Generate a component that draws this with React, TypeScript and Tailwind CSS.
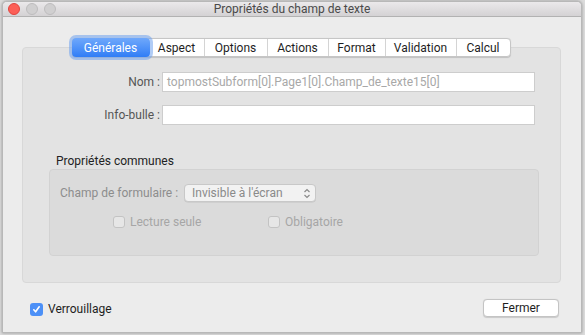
import React from "react";

const tabs = [
  { label: "Générales", w: "w-[78px]" },
  { label: "Aspect", w: "w-[54px]" },
  { label: "Options", w: "w-[63px]" },
  { label: "Actions", w: "w-[61px]" },
  { label: "Format", w: "w-[57px]" },
  { label: "Validation", w: "w-[71px]" },
  { label: "Calcul", w: "w-[54px]" },
];

export default function App() {
  return (
    <div
      className="w-[585px] h-[335px] bg-[#dcdcdc] overflow-hidden"
      style={{ fontFamily: "Roboto, 'Liberation Sans', sans-serif" }}
    >
      <div className="ml-[2px] mt-[1px] w-[580px] h-[332px] flex flex-col bg-[#ececec] border border-[#b8b8b8] rounded-t-[5px] shadow-[0_0_3px_rgba(0,0,0,0.35)] overflow-hidden">
        {/* title bar */}
        <div className="relative h-[15px] shrink-0 flex items-center justify-center bg-gradient-to-b from-[#ebe9eb] to-[#d4d2d4] border-b border-[#b2b2b2]">
          <div className="absolute left-[5px] top-[1px] flex gap-[6px]">
            <div className="w-[12px] h-[12px] rounded-full bg-[#fc5f57] border border-[#e0443e]" />
            <div className="w-[12px] h-[12px] rounded-full bg-[#d0cfd0] border border-[#bdbcbd]" />
            <div className="w-[12px] h-[12px] rounded-full bg-[#d0cfd0] border border-[#bdbcbd]" />
          </div>
          <span className="text-[12px] leading-none text-[#4a4a4a]">Propriétés du champ de texte</span>
        </div>

        {/* body */}
        <div className="flex-1 flex flex-col pt-[21px] px-[19px]">
          {/* tabs */}
          <div className="relative z-10 flex justify-center mb-[-10px] pr-[2px]">
            <div className="flex h-[19px] rounded-[4px] bg-white border border-[#c6c6c6] shadow-[0_0.5px_1px_rgba(0,0,0,0.15)]">
              {tabs.map((t, i) =>
                i === 0 ? (
                  <div
                    key={t.label}
                    className={`${t.w} -my-[1px] -ml-[1px] flex items-center justify-center rounded-[4px] bg-gradient-to-b from-[#6fa8fb] to-[#2f7df6] text-white text-[12px] shadow-[0_0_0_3px_rgba(112,162,238,0.55)]`}
                  >
                    {t.label}
                  </div>
                ) : (
                  <div
                    key={t.label}
                    className={`${t.w} flex items-center justify-center text-[12px] text-[#1e1e1e] ${i > 1 ? "border-l border-[#d4d4d4]" : ""}`}
                  >
                    {t.label}
                  </div>
                )
              )}
            </div>
          </div>

          {/* panel */}
          <div className="w-[539px] h-[236px] bg-[#e3e3e3] border border-[#d8d8d8] rounded-[4px] pt-[24px] pr-[25px] flex flex-col">
            <div className="flex items-center h-[20px]">
              <div className="w-[139px] text-right pr-[2px] text-[12px] text-[#555]">Nom :</div>
              <div className="flex-1 h-[20px] bg-white border border-[#cdcdcd] flex items-center px-[4px] text-[12px] text-[#a8a8a8]">
                topmostSubform[0].Page1[0].Champ_de_texte15[0]
              </div>
            </div>
            <div className="flex items-center h-[20px] mt-[13px]">
              <div className="w-[139px] text-right pr-[2px] text-[12px] text-[#555]">Info-bulle :</div>
              <div className="flex-1 h-[20px] bg-white border border-[#cdcdcd]" />
            </div>

            <div className="ml-[33px] mt-[29px] text-[12px] leading-[14px] text-[#222]">Propriétés communes</div>
            <div className="ml-[26px] mt-[1px] w-[490px] h-[87px] bg-[#dbdbdb] border border-[#d2d2d2] rounded-[4px] pt-[14px] pl-[10px]">
              <div className="flex items-center">
                <span className="w-[124px] shrink-0 text-[12px] text-[#8d8d8d]">Champ de formulaire :</span>
                <div className="w-[132px] h-[18px] bg-[#f2f2f2] border border-[#c8c8c8] rounded-[4px] flex items-center justify-between pl-[7px] pr-[4px] shadow-[0_0.5px_0.5px_rgba(0,0,0,0.1)]">
                  <span className="text-[12px] text-[#8a8a8a]">Invisible à l'écran</span>
                  <svg width="8" height="11" viewBox="0 0 8 11" fill="none" stroke="#8a8a8a" strokeWidth="1.2">
                    <path d="M1.5 4 L4 1.5 L6.5 4" />
                    <path d="M1.5 7 L4 9.5 L6.5 7" />
                  </svg>
                </div>
              </div>
              <div className="flex items-center mt-[11px] ml-[53px]">
                <div className="w-[155px] flex items-center">
                  <div className="w-[12px] h-[12px] rounded-[3px] border border-[#c3c3c3] bg-[#e6e6e6]" />
                  <span className="ml-[5px] text-[12px] text-[#a6a6a6]">Lecture seule</span>
                </div>
                <div className="flex items-center">
                  <div className="w-[12px] h-[12px] rounded-[3px] border border-[#c3c3c3] bg-[#e6e6e6]" />
                  <span className="ml-[5px] text-[12px] text-[#a6a6a6]">Obligatoire</span>
                </div>
              </div>
            </div>
          </div>

          {/* footer */}
          <div className="flex items-center justify-between mt-[15px] pl-[8px] pr-[3px]">
            <div className="flex items-center mt-[2px]">
              <div className="w-[13px] h-[13px] rounded-[3px] bg-[#4c90f7] flex items-center justify-center">
                <svg width="9" height="9" viewBox="0 0 9 9" fill="none" stroke="white" strokeWidth="1.6" strokeLinecap="round" strokeLinejoin="round">
                  <path d="M1.8 4.8 L3.6 6.8 L7.2 1.8" />
                </svg>
              </div>
              <span className="ml-[5px] text-[12px] text-[#1e1e1e]">Verrouillage</span>
            </div>
            <div className="w-[76px] h-[18px] bg-white border border-[#c4c4c4] rounded-[4px] flex items-center justify-center text-[12px] text-[#1e1e1e] shadow-[0_0.5px_1px_rgba(0,0,0,0.15)]">
              Fermer
            </div>
          </div>
        </div>
      </div>
    </div>
  );
}
